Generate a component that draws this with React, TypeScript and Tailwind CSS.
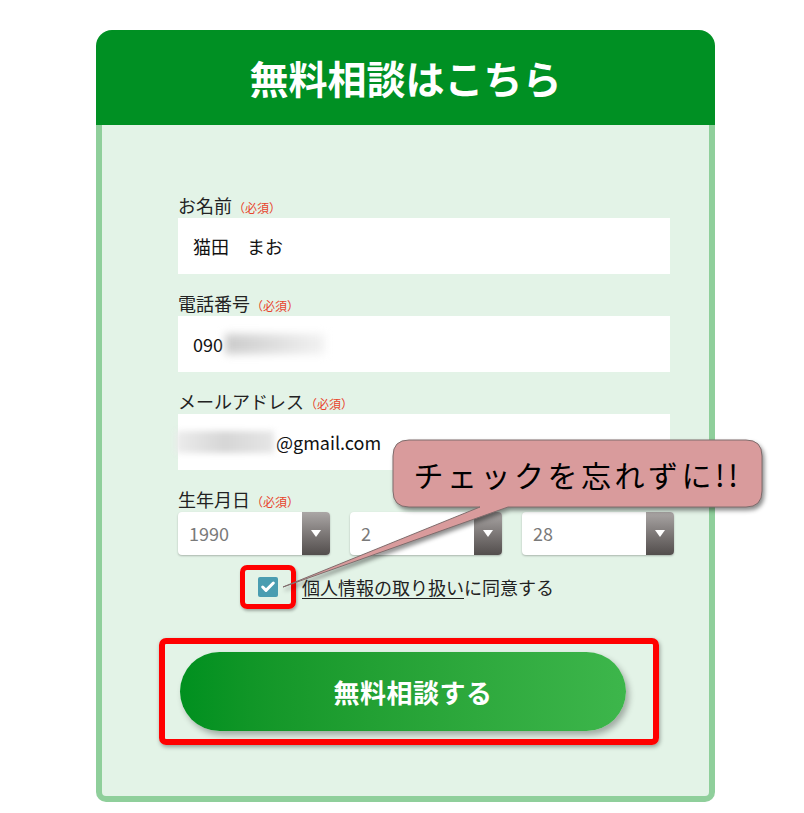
import { Check } from "lucide-react";

// 入力欄の見出し
function FieldLabel({ text }: { text: string }) {
  return (
    <div className="flex items-baseline h-[20px] leading-[20px]">
      <span className="text-[18px] text-[#222]">{text}</span>
      <span className="text-[12px] text-[#e8432c] ml-[1px]">（必須）</span>
    </div>
  );
}

function SelectBox({ value }: { value: string }) {
  return (
    <div className="flex w-[152px] h-[43px] bg-white rounded-[4px] shadow-[0_1px_2px_rgba(0,0,0,0.25)]">
      <div className="flex-1 flex items-center pl-[11px] text-[18px] text-[#7a7a7a]">{value}</div>
      <div className="w-[28px] rounded-r-[4px] bg-gradient-to-b from-[#aba7a6] to-[#534e4d] flex items-center justify-center">
        <div className="w-0 h-0 border-l-[5px] border-r-[5px] border-t-[7px] border-l-transparent border-r-transparent border-t-white" />
      </div>
    </div>
  );
}

export default function App() {
  return (
    <div className="relative w-[804px] h-[813px] bg-white overflow-hidden font-['Noto_Sans_CJK_JP','Noto_Sans',sans-serif]">
      <div className="pt-[30px] pl-[96px]">
        <div className="w-[619px]">
          {/* Header */}
          <div className="h-[95px] rounded-t-[16px] bg-[#009023] flex items-center justify-center">
            <h2 className="text-[39px] font-bold text-white leading-none">無料相談はこちら</h2>
          </div>

          {/* Form body */}
          <div className="h-[677px] bg-[#e3f3e7] border-x-[6px] border-b-[6px] border-[#8fcf9b] rounded-b-[10px] pl-[76px] pt-[70px]">
            <FieldLabel text="お名前" />
            <div className="mt-[3px] w-[492px] h-[56px] bg-white flex items-center pl-[15px] text-[18px] text-[#111]">
              猫田　まお
            </div>

            <div className="mt-[19px]">
              <FieldLabel text="電話番号" />
            </div>
            <div className="mt-[3px] w-[492px] h-[56px] bg-white flex items-center pl-[15px] text-[18px] text-[#111]">
              <span>090</span>
              <span className="inline-block w-[100px] h-[20px] ml-[2px] bg-gradient-to-r from-[#cbcbcb] to-[#f3f3f3] blur-[4px]" />
            </div>

            <div className="mt-[19px]">
              <FieldLabel text="メールアドレス" />
            </div>
            <div className="mt-[3px] w-[492px] h-[56px] bg-white flex items-center text-[18px] text-[#111]">
              <span className="inline-block w-[98px] h-[22px] -ml-[2px] bg-gradient-to-r from-[#ececec] via-[#d6d6d6] to-[#e6e6e6] blur-[3px]" />
              <span className="ml-[2px]">@gmail.com</span>
            </div>

            <div className="mt-[19px]">
              <FieldLabel text="生年月日" />
            </div>
            <div className="mt-[3px] flex gap-[20px]">
              <SelectBox value="1990" />
              <SelectBox value="2" />
              <SelectBox value="28" />
            </div>

            <div className="mt-[22px] h-[20px] flex items-center text-[18px] text-[#222]">
              <div className="relative ml-[80px] mr-[24px] w-[20px] h-[20px]">
                <div className="w-[20px] h-[20px] rounded-[2px] bg-[#4a9db1] flex items-center justify-center">
                  <Check size={16} strokeWidth={4.5} className="text-white" />
                </div>
                <div className="absolute -left-[18px] -top-[12px] w-[56px] h-[44px] border-[5px] border-[#ff0000] rounded-[7px] shadow-[1px_2px_3px_rgba(0,0,0,0.3)]" />
              </div>
              <span className="underline underline-offset-[3px]">個人情報の取り扱い</span>
              <span>に同意する</span>
            </div>

            <div className="relative mt-[55px] ml-[2px] w-[446px] h-[79px]">
              <button className="w-full h-full pl-[20px] rounded-full bg-gradient-to-r from-[#00901f] to-[#3db64b] shadow-[3px_4px_6px_rgba(0,0,0,0.3)] text-white text-[26px] font-bold tracking-[0.5px] flex items-center justify-center">
                無料相談する
              </button>
              <div className="absolute -left-[21px] -top-[14px] w-[500px] h-[107px] border-[6px] border-[#ff0000] rounded-[7px] shadow-[1px_2px_4px_rgba(0,0,0,0.35)]" />
            </div>
          </div>
        </div>
      </div>

      {/* Callout bubble */}
      <svg
        className="absolute left-0 top-0 pointer-events-none drop-shadow-[2px_3px_2px_rgba(0,0,0,0.45)]"
        width="804"
        height="813"
        viewBox="0 0 804 813"
      >
        <path
          d="M409 440 H746 Q762 440 762 456 V491 Q762 507 746 507 H508 L283 587 L480 507 H409 Q393 507 393 491 V456 Q393 440 409 440 Z"
          fill="#d99b9c"
          stroke="#7f6c6c"
          strokeWidth="1"
        />
      </svg>
      <div className="absolute left-[393px] top-[440px] w-[369px] h-[67px] flex items-center justify-center text-[30px] tracking-[3.5px] text-black leading-none">
        チェックを忘れずに!!
      </div>
    </div>
  );
}
